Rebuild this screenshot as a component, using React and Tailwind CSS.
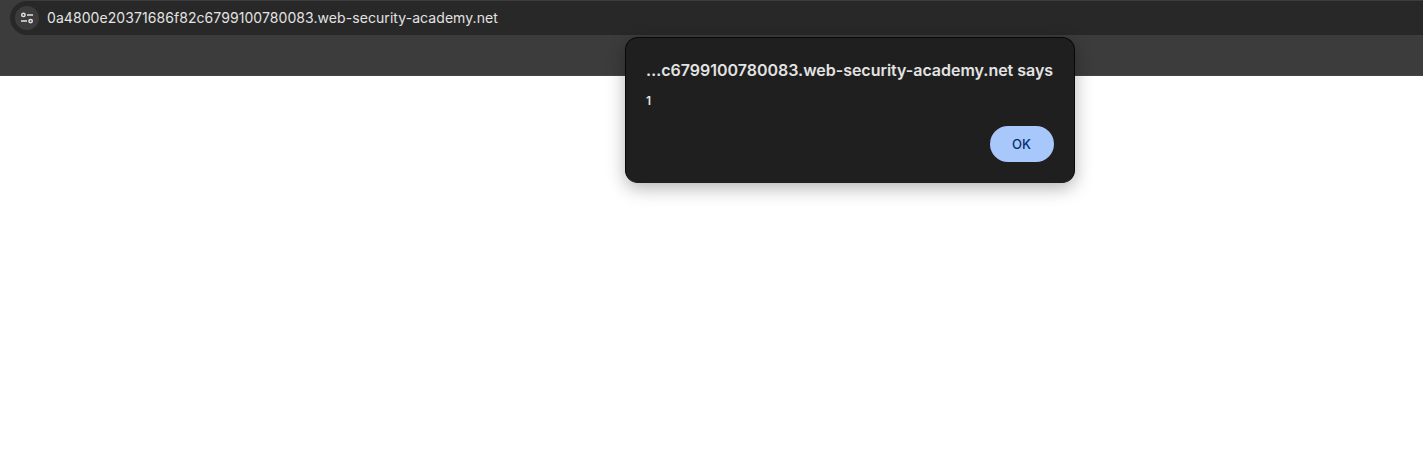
function TuneIcon() {
  return (
    <svg width="14" height="14" viewBox="0 0 14 14" fill="none" stroke="#e3e3e3" strokeWidth="1.5">
      <circle cx="3.4" cy="3.9" r="1.7" />
      <path d="M7 3.9h6M1 10.1h6" />
      <circle cx="10.6" cy="10.1" r="1.7" />
    </svg>
  );
}

function AddressBar() {
  return (
    <header className="h-[76px] border-b border-[#484246] bg-[#3c3c3c] pt-px pl-[10px]">
      <div className="flex h-[34px] items-center rounded-l-full bg-[#282828] pl-[5px]">
        <button className="flex size-6 items-center justify-center rounded-full bg-[#3c3c3c]">
          <TuneIcon />
        </button>
        <span className="ml-2 text-[14px] leading-5 tracking-[0.07px] whitespace-nowrap text-[#e3e3e3]">
          0a4800e20371686f82c6799100780083.web-security-academy.net
        </span>
      </div>
    </header>
  );
}

function AlertDialog() {
  return (
    <div
      role="alertdialog"
      className="absolute top-[37px] left-[625px] flex h-[146px] w-[450px] flex-col rounded-[13px] border border-[#080808] border-b-[#1f1f1f] bg-[#1f1f1f] px-5 pt-5 pb-5 shadow-[0_5px_18px_rgba(0,0,0,0.3)]"
    >
      <h1 className="text-[16px] leading-6 font-semibold tracking-[-0.02px] whitespace-nowrap text-[#e3e3e3]">
        …c6799100780083.web-security-academy.net says
      </h1>
      <p className="mt-[9px] text-[12px] leading-5 font-semibold text-[#e3e3e3]">1</p>
      <button className="mt-auto h-9 w-16 self-end rounded-full bg-[#a8c7fa] pt-0.5 pr-px text-[13px] font-medium text-[#062e6f]">
        OK
      </button>
    </div>
  );
}

export default function App() {
  return (
    <main className="relative h-[473px] w-full overflow-hidden bg-white font-['Inter',sans-serif]">
      <AddressBar />
      <AlertDialog />
    </main>
  );
}
